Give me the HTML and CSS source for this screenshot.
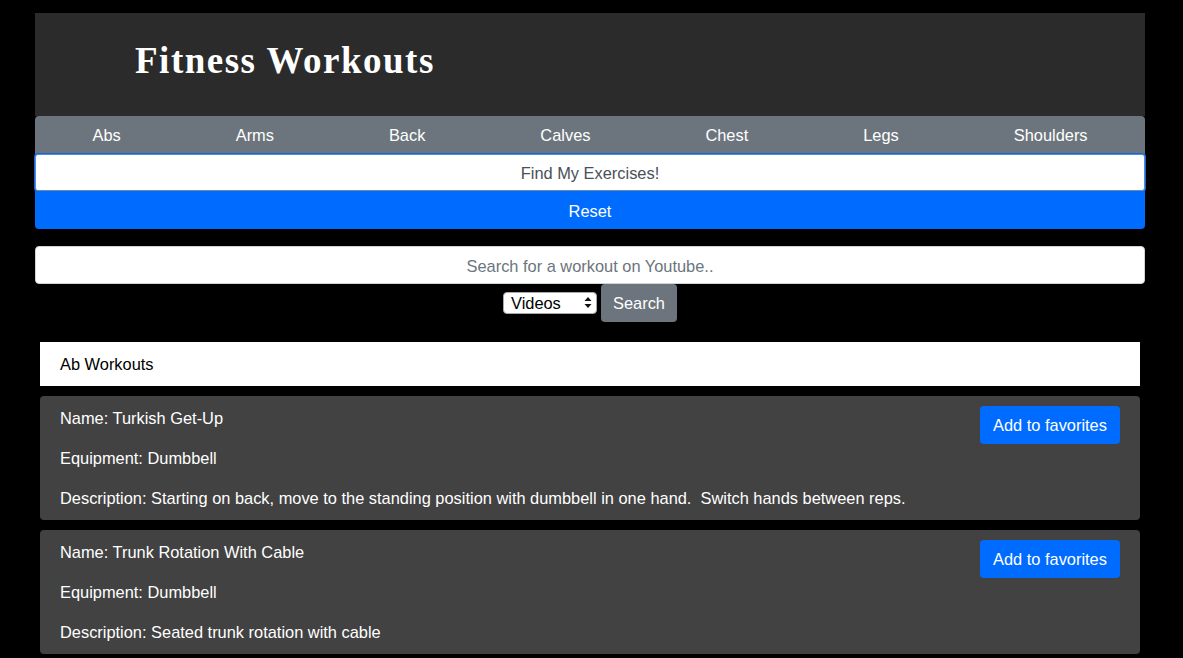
FILE: index.html
```html
<!DOCTYPE html>
<html>
<head>
<meta charset="utf-8">
<link rel="stylesheet" href="styles.css">
</head>
<body>
<div class="page">
  <header class="hero">
    <h1 class="title">Fitness Workouts</h1>
  </header>
  <div class="cats">
    <button class="cat">Abs</button>
    <button class="cat">Arms</button>
    <button class="cat">Back</button>
    <button class="cat">Calves</button>
    <button class="cat">Chest</button>
    <button class="cat">Legs</button>
    <button class="cat">Shoulders</button>
  </div>
  <button class="find">Find My Exercises!</button>
  <button class="reset">Reset</button>

  <div class="yt">
    <div class="yt-input">Search for a workout on Youtube..</div>
    <div class="yt-row">
      <div class="fake-select">
        <span>Videos</span>
        <svg width="8" height="13" viewBox="0 0 8 13"><path d="M4 1 L7.5 5 H0.5 Z M4 12 L7.5 8 H0.5 Z" fill="#111"/></svg>
      </div>
      <button class="yt-btn">Search</button>
    </div>
  </div>

  <section class="results">
    <div class="res-head">Ab Workouts</div>
    <div class="card">
      <div class="card-text">
        <p>Name: Turkish Get-Up</p>
        <p>Equipment: Dumbbell</p>
        <p>Description: Starting on back, move to the standing position with dumbbell in one hand.&nbsp; Switch hands between reps.</p>
      </div>
      <button class="fav">Add to favorites</button>
    </div>
    <div class="card">
      <div class="card-text">
        <p>Name: Trunk Rotation With Cable</p>
        <p>Equipment: Dumbbell</p>
        <p>Description: Seated trunk rotation with cable</p>
      </div>
      <button class="fav">Add to favorites</button>
    </div>
  </section>
</div>
</body>
</html>
```

FILE: styles.css
```css
* { box-sizing: border-box; }
html, body { margin: 0; padding: 0; background: #000; }
body {
  font-family: "Liberation Sans", Arial, sans-serif;
  font-size: 16.4px;
  line-height: 24px;
  color: #fff;
}
.page {
  width: 1110px;
  margin: 0 0 0 35px;
  padding-top: 13px;
}
.hero {
  background: #2b2b2b;
  height: 103px;
  padding: 26px 0 0 100px;
}
.title {
  margin: 0;
  font-family: "Liberation Serif", "Times New Roman", serif;
  font-weight: bold;
  font-size: 37px;
  line-height: 44px;
  letter-spacing: 1.5px;
  color: #fff;
}
.cats {
  display: flex;
  background: #6c757d;
  border-radius: 4px 4px 0 0;
}
.cat {
  flex: 1 1 auto;
  background: transparent;
  border: 0;
  color: #fff;
  font: inherit;
  padding: 7px 12px;
  height: 38px;
}
.find {
  display: block;
  width: 100%;
  height: 37px;
  background: #fff;
  color: #495057;
  border: 1px solid #4a90e2;
  box-shadow: 0 0 0 1px #1f64c8;
  border-radius: 3px;
  font: inherit;
  padding-top: 2px;
  position: relative;
  z-index: 1;
}
.reset {
  display: block;
  width: 100%;
  height: 38px;
  background: #006cff;
  color: #fff;
  border: 0;
  border-radius: 0 0 4px 4px;
  font: inherit;
  padding-top: 3px;
}
.yt { margin-top: 17px; }
.yt-input {
  height: 38px;
  background: #fff;
  border: 1px solid #ced4da;
  border-radius: 4px;
  color: #6c757d;
  text-align: center;
  padding: 7px 12px 5px;
}
.yt-row {
  display: flex;
  justify-content: center;
  align-items: center;
  gap: 4px;
}
.fake-select {
  width: 94px;
  height: 22px;
  margin-top: -1px;
  background: #fff;
  border: 1px solid #a9a9a9;
  border-radius: 4px;
  color: #000;
  display: flex;
  align-items: center;
  justify-content: space-between;
  padding: 0 4px 0 7px;
  font-size: 16.4px;
  line-height: 20px;
}
.yt-btn {
  width: 76px;
  height: 38px;
  background: #6c757d;
  color: #fff;
  border: 0;
  border-radius: 4px;
  font: inherit;
  padding-top: 1px;
}
.results {
  margin: 20px 5px 0;
}
.res-head {
  background: #fff;
  color: #000;
  padding: 10px 20px;
  margin-bottom: 10px;
}
.card {
  background: #424242;
  border-radius: 4px;
  padding: 10px 20px;
  display: flex;
  justify-content: space-between;
  align-items: flex-start;
  margin-bottom: 10px;
}
.card-text p { margin: 0 0 16px; }
.card-text p:last-child { margin-bottom: 0; }
.fav {
  background: #006cff;
  color: #fff;
  border: 0;
  border-radius: 4px;
  font: inherit;
  padding: 0 12px;
  height: 38px;
  width: 140px;
  flex: none;
}
```
